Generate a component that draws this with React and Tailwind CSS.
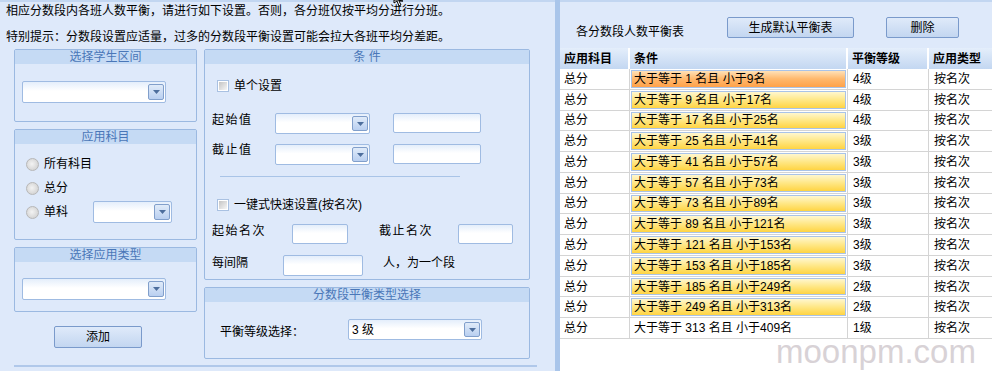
import React from "react";

const rows = [
  ["1", "9", "4"],
  ["9", "17", "4"],
  ["17", "25", "4"],
  ["25", "41", "3"],
  ["41", "57", "3"],
  ["57", "73", "3"],
  ["73", "89", "3"],
  ["89", "121", "3"],
  ["121", "153", "3"],
  ["153", "185", "3"],
  ["185", "249", "2"],
  ["249", "313", "2"],
  ["313", "409", "1"],
];

function Group({ title, className, children }) {
  return (
    <div className={`border border-[#9bb9e1] rounded-[2px] ${className}`}>
      <div className="h-[14px] bg-[#c5daf4] text-center text-[#4a77b8] leading-[14px]">{title}</div>
      {children}
    </div>
  );
}

function Combo({ className, text }) {
  return (
    <div className={`flex items-center justify-between border border-[#9fbbe2] rounded-[2px] bg-[linear-gradient(#e4eefb,#ffffff_45%)] ${className}`}>
      <span className="pl-[3px] leading-[14px]">{text}</span>
      <div className="mr-[1px] w-[16px] h-[calc(100%-4px)] flex items-center justify-center border border-[#819fcb] rounded-[2px] bg-[linear-gradient(#e0ebf9,#b9cff0)]">
        <svg width="7" height="4" viewBox="0 0 7 4">
          <path d="M0 0h7L3.5 4z" fill="#4d6e9d" />
        </svg>
      </div>
    </div>
  );
}

function TextBox({ className }) {
  return <div className={`border border-[#9fbbe2] rounded-[2px] bg-[linear-gradient(#e4eefb,#ffffff_45%)] ${className}`} />;
}

function Btn({ className, children }) {
  return (
    <div className={`flex items-center justify-center border border-[#7a9acb] rounded-[2px] bg-[linear-gradient(#dfeafa,#c3d6f0)] ${className}`}>
      {children}
    </div>
  );
}

function Check({ label }) {
  return (
    <div className="flex items-center h-[14px] pl-[12px] gap-[5px]">
      <div className="w-[12px] h-[12px] border border-[#a9c1e2] p-[1px] bg-white">
        <div className="w-full h-full bg-[linear-gradient(135deg,#c4c4c4,#f6f6f6)]" />
      </div>
      <span>{label}</span>
    </div>
  );
}

function Radio({ label, children }) {
  return (
    <div className="flex items-center h-[16px] pl-[11px]">
      <div className="w-[13px] h-[13px] rounded-full border border-[#b7b7b7] bg-[radial-gradient(circle_at_45%_45%,#f3f3f3,#cacaca)]" />
      <span className="ml-[5px]">{label}</span>
      {children}
    </div>
  );
}

export default function App() {
  return (
    <div className="relative w-[992px] h-[371px] flex overflow-hidden bg-[#dee9fa] text-[12px] leading-[14px] text-black font-['Liberation_Sans','Noto_Sans_CJK_SC',sans-serif]">
      {/* left settings panel */}
      <div className="w-[555px] shrink-0 border-t-2 border-[#c2d6f1]">
        <p className="pl-[6px] pt-[2px]">相应分数段内各班人数平衡，请进行如下设置。否则，各分班仅按平均分进行分班。</p>
        <p className="pl-[6px] mt-[12px]">特别提示：分数段设置应适量，过多的分数段平衡设置可能会拉大各班平均分差距。</p>

        <div className="flex items-start pl-[14px] gap-[7px] mt-[5px]">
          <div className="w-[183px] flex flex-col">
            <Group title="选择学生区间" className="h-[73px]">
              <Combo className="ml-[7px] mt-[17px] w-[144px] h-[22px]" />
            </Group>

            <Group title="应用科目" className="h-[111px] mt-[7px]">
              <div className="flex flex-col gap-[8px] mt-[12px]">
                <Radio label="所有科目" />
                <Radio label="总分" />
                <Radio label="单科">
                  <Combo className="ml-[25px] w-[79px] h-[22px] shrink-0" />
                </Radio>
              </div>
            </Group>

            <Group title="选择应用类型" className="h-[65px] mt-[7px]">
              <Combo className="ml-[7px] mt-[16px] w-[144px] h-[22px]" />
            </Group>

            <Btn className="ml-[40px] mt-[14px] w-[88px] h-[22px]">添加</Btn>
          </div>

          <div className="w-[326px] flex flex-col">
            <Group title="条 件" className="h-[231px]">
              <div className="mt-[15px]">
                <Check label="单个设置" />
              </div>
              <div className="flex items-start h-[21px] mt-[20px] pl-[7px]">
                <span className="w-[63px] tracking-[1.5px]">起始值</span>
                <Combo className="w-[95px] h-[21px]" />
                <TextBox className="ml-[23px] w-[88px] h-[20px]" />
              </div>
              <div className="flex items-start h-[21px] mt-[10px] pl-[7px]">
                <span className="w-[63px] mt-[-1px] tracking-[1.5px]">截止值</span>
                <Combo className="w-[95px] h-[21px]" />
                <TextBox className="ml-[23px] w-[88px] h-[20px]" />
              </div>
              <div className="ml-[15px] mt-[11px] w-[240px] h-[1px] bg-[#a9c4e7]" />
              <div className="mt-[21px]">
                <Check label="一键式快速设置(按名次)" />
              </div>
              <div className="flex items-start h-[20px] mt-[12px] pl-[7px]">
                <span className="w-[80px] tracking-[1.5px]">起始名次</span>
                <TextBox className="w-[56px] h-[20px]" />
                <span className="ml-[31px] w-[79px] tracking-[1.5px]">截止名次</span>
                <TextBox className="w-[55px] h-[20px]" />
              </div>
              <div className="flex items-start h-[21px] mt-[11px] pl-[7px]">
                <span className="w-[71px] mt-[1px]">每间隔</span>
                <TextBox className="w-[80px] h-[21px]" />
                <span className="ml-[20px] mt-[1px]">人，为一个段</span>
              </div>
            </Group>

            <Group title="分数段平衡类型选择" className="h-[72px] mt-[7px]">
              <div className="flex items-center h-[21px] mt-[17px] pl-[15px]">
                <span className="w-[128px] mt-[4px]">平衡等级选择：</span>
                <Combo className="w-[134px] h-[21px]" text="3 级" />
              </div>
            </Group>
          </div>
        </div>

        <div className="ml-[14px] mt-[6px] w-[523px] h-[2px] bg-[#b0c8ea]" />
      </div>

      {/* right table panel */}
      <div className="flex-1 flex flex-col border-l-[5px] border-[#a9c5ea] bg-white">
        <div className="h-[48px] shrink-0 flex items-start pl-[16px] bg-[#dee9fa] border-t-2 border-[#c2d6f1]">
          <span className="w-[151px] mt-[23px]">各分数段人数平衡表</span>
          <Btn className="mt-[15px] w-[127px] h-[21px]">生成默认平衡表</Btn>
          <Btn className="ml-[32px] mt-[15px] w-[73px] h-[21px]">删除</Btn>
        </div>

        <div className="grid grid-cols-[70px_218px_81px_63px] h-[21px] shrink-0 font-bold bg-[linear-gradient(#e4eefb,#c3d7f1)]">
          <div className="pl-[4px] flex items-center border-r-2 border-white">应用科目</div>
          <div className="pl-[4px] flex items-center border-r-2 border-white">条件</div>
          <div className="pl-[4px] flex items-center border-r-2 border-white">平衡等级</div>
          <div className="pl-[4px] flex items-center">应用类型</div>
        </div>

        {rows.map(([from, to, level], i) => {
          const first = i === 0;
          const last = i === rows.length - 1;
          return (
            <div key={i} className="grid grid-cols-[70px_218px_81px_63px] h-[20.77px] shrink-0 border-b border-[#d4d4d4]">
              <div className="pl-[4px] flex items-center border-r border-[#d4d4d4]">总分</div>
              <div className="flex items-stretch border-r border-[#d4d4d4] py-[1px] px-[1px]">
                {last ? (
                  <div className="flex-1 flex items-center pl-[3px]">大于等于 {from} 名且 小于{to}名</div>
                ) : (
                  <div
                    className={`flex-1 flex items-center pl-[2px] border border-[#a9c3e8] ${
                      first
                        ? "bg-[linear-gradient(#ffe1b8,#ffb86c_50%,#ffa24a)]"
                        : "bg-[linear-gradient(#fff7cf,#ffe785_50%,#ffd443)]"
                    }`}
                  >
                    大于等于 {from} 名且 小于{to}名
                  </div>
                )}
              </div>
              <div className="pl-[5px] flex items-center border-r border-[#d4d4d4]">{level}级</div>
              <div className="pl-[5px] flex items-center">按名次</div>
            </div>
          );
        })}
      </div>

      {/* watermark */}
      <span className="absolute left-[776px] top-[340px] text-[33px] leading-[24px] text-[#d8d2d6] font-['Liberation_Sans',sans-serif]">
        moonpm.com
      </span>

      {/* mouse cursor */}
      <svg className="absolute left-[393px] top-0" width="14" height="9" viewBox="0 0 14 9">
        <path d="M1 0v3l3-2 2 5 2-1-2-4h4L4 0z" fill="#fff" stroke="#000" strokeWidth="1" />
      </svg>
    </div>
  );
}
